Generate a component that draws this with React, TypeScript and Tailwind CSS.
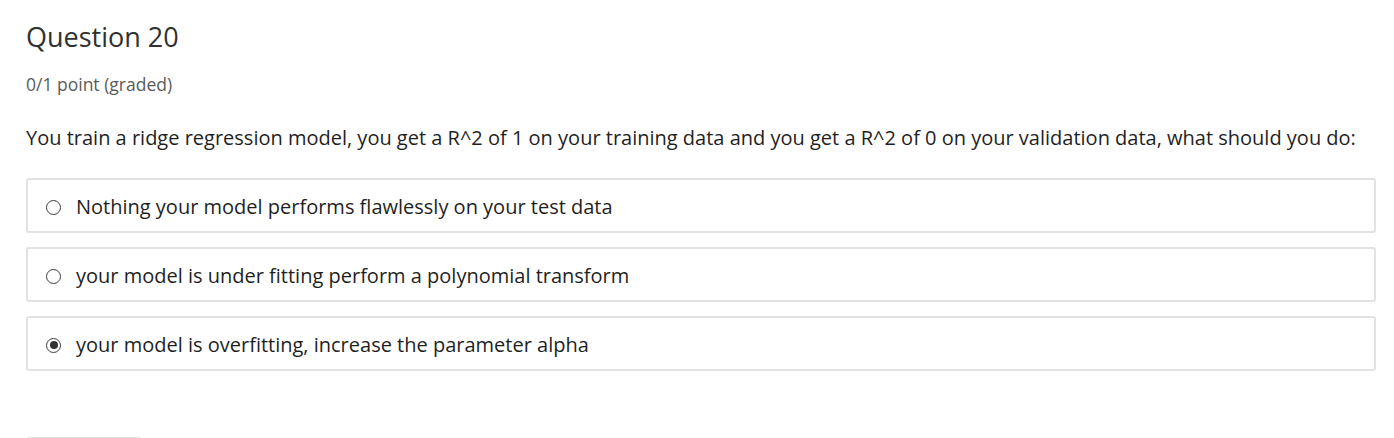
const options = [
  { text: "Nothing your model performs flawlessly on your test data", checked: false },
  { text: "your model is under fitting perform a polynomial transform", checked: false },
  { text: "your model is overfitting, increase the parameter alpha", checked: true },
]

function Radio({ checked }: { checked: boolean }) {
  return (
    <span className="flex h-[15px] w-[15px] shrink-0 items-center justify-center rounded-full border-[1.5px] border-[#3c3c3c] bg-white">
      {checked && <span className="h-[8px] w-[8px] rounded-full bg-[#333]" />}
    </span>
  )
}

export default function App() {
  return (
    <div className="h-[438px] overflow-hidden bg-white pl-[26px] pt-[20px] font-['Open_Sans',sans-serif]">
      <h3 className="text-[27px] leading-[34px] text-[#313131]">Question 20</h3>
      <div className="mt-[19px] text-[17.5px] leading-[22px] text-[#5b5b5b]">0/1 point (graded)</div>

      <p className="mt-[29px] text-[20px] leading-[28px] text-[#1f1f1f]">
        You train a ridge regression model, you get a R^2 of 1 on your training data and you get a R^2 of 0 on your
        validation data, what should you do:
      </p>

      <div className="mt-[26px] flex w-[1350px] flex-col gap-[14px]">
        {options.map((opt, i) => (
          <label
            key={i}
            className="flex h-[55px] items-center gap-[15px] rounded-[3px] border-2 border-[#e2e2e2] pl-[18px] pt-[3px] text-[20px] text-[#1f1f1f]"
          >
            <Radio checked={opt.checked} />
            <span>{opt.text}</span>
          </label>
        ))}
      </div>

      <div className="mt-[66px] h-[30px] w-[116px] rounded-[3px] border-2 border-[#e2e2e2]" />
    </div>
  )
}
